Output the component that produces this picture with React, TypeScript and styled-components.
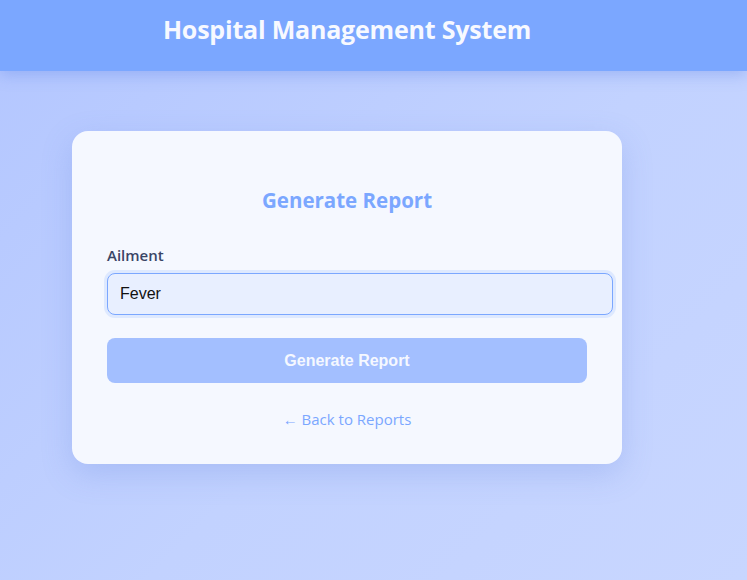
import styled, { createGlobalStyle } from 'styled-components';

const GlobalStyle = createGlobalStyle`
  * { box-sizing: content-box; }
  body {
    margin: 0;
    font-family: 'Open Sans', 'Noto Sans', sans-serif;
    background: linear-gradient(135deg, #b3c6ff 0%, #c2d2ff 55%, #c8d6ff 100%);
    min-height: 100vh;
  }
`;

const Header = styled.header`
  background: #7ba7ff;
  height: 71px;
  box-shadow: 0 4px 14px rgba(90, 130, 230, 0.35);
`;

const Inner = styled.div`
  width: 694px;
  text-align: center;
`;

const Title = styled.h1`
  margin: 0;
  padding-top: 12px;
  font-size: 25px;
  font-weight: 700;
  color: #f7f9ff;
  letter-spacing: -0.2px;
`;

const Main = styled.main`
  width: 694px;
  padding-top: 60px;
  padding-bottom: 60px;
`;

const Card = styled.div`
  width: 480px;
  margin: 0 auto;
  padding: 55px 35px 35px;
  background: #f5f8ff;
  border-radius: 16px;
  box-shadow: 0 10px 30px rgba(100, 130, 220, 0.25);
`;

const CardTitle = styled.h2`
  margin: 0 0 31px;
  text-align: center;
  font-size: 20.5px;
  font-weight: 700;
  color: #7ba7ff;
`;

const Label = styled.label`
  display: block;
  margin-bottom: 8px;
  font-size: 15px;
  font-weight: 600;
  color: #3a4566;
`;

const Input = styled.input`
  display: block;
  width: 100%;
  height: 40px;
  padding: 0 12px;
  border: 1px solid #7ba7ff;
  border-radius: 8px;
  background: #e8efff;
  font-family: 'Liberation Sans', Arial, sans-serif;
  font-size: 16px;
  color: #111;
  outline: none;
  box-shadow: 0 0 0 3px rgba(123, 167, 255, 0.18);
`;

const Button = styled.button`
  display: block;
  width: 100%;
  height: 45px;
  margin-top: 23px;
  border: none;
  border-radius: 8px;
  background: #a3bfff;
  color: #f5f8ff;
  font-family: 'Liberation Sans', Arial, sans-serif;
  font-size: 16px;
  font-weight: 700;
  box-sizing: border-box;
`;

const BackLink = styled.a`
  display: block;
  margin-top: 26px;
  text-align: center;
  font-size: 15px;
  color: #7ba7ff;
  text-decoration: none;
`;

export default function App() {
  return (
    <>
      <GlobalStyle />
      <Header>
        <Inner>
          <Title>Hospital Management System</Title>
        </Inner>
      </Header>
      <Main>
        <Card>
          <CardTitle>Generate Report</CardTitle>
          <Label htmlFor="ailment">Ailment</Label>
          <Input id="ailment" defaultValue="Fever" />
          <Button>Generate Report</Button>
          <BackLink href="#">← Back to Reports</BackLink>
        </Card>
      </Main>
    </>
  );
}
